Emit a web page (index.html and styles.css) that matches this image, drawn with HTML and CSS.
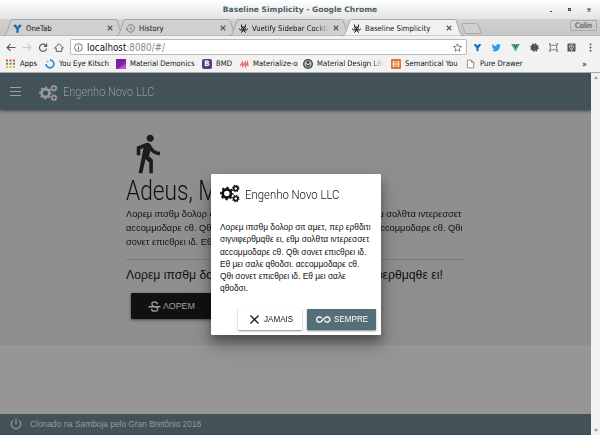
FILE: index.html
```html
<!DOCTYPE html>
<html lang="pt">
<head>
<meta charset="utf-8">
<title>Baseline Simplicity</title>
<link rel="stylesheet" href="styles.css">
</head>
<body>
<svg class="defs" width="0" height="0">
  <symbol id="tab" viewBox="0 0 122 17"><path d="M0 17C3 17 3 15 8 1.5Q8.300.5 9.500.5H112.500Q113.500.5 114 1.500C119 15 118 17 122 17z"/></symbol>
  <symbol id="cogs" viewBox="0 0 20 18">
    <g fill="none" stroke="currentColor">
      <circle cx="6.500" cy="9" r="3.900" stroke-width="2.600"/><circle cx="6.500" cy="9" r="5.500" stroke-width="1.800" stroke-dasharray="2.160 2.160" stroke-dashoffset="1.080"/>
      <circle cx="15" cy="4.200" r="2" stroke-width="1.500"/><circle cx="15" cy="4.200" r="3" stroke-width="1.100" stroke-dasharray="1.178 1.178"/>
      <circle cx="15" cy="13.800" r="2" stroke-width="1.500"/><circle cx="15" cy="13.800" r="3" stroke-width="1.100" stroke-dasharray="1.178 1.178"/>
    </g>
  </symbol>
  <symbol id="bio" viewBox="0 0 18 18"><g fill="none" stroke="#222" stroke-width="2"><path d="M5 1Q3 7 9 8Q15 7 13 1"/><path d="M1 9Q2 16 9 9Q16 16 17 9"/><path d="M4 17Q9 16 9 9Q9 16 14 17"/><circle cx="9" cy="9" r="3.500"/></g></symbol>
  <symbol id="funnel" viewBox="0 0 16 16"><path d="M0 2 5 1 8 5 11 1 16 2 10 9V15L8 16 6 15V9z" fill="#1767ae"/><path d="M5 1 8 6 11 1 8 3z" fill="#64c4ef"/></symbol>
  <symbol id="close" viewBox="0 0 8 8"><path d="M1 1 7 7M7 1 1 7" fill="none" stroke="#555" stroke-width="1.500"/></symbol>
</svg>

<div class="titlebar">
  <span class="window-title">Baseline Simplicity - Google Chrome</span>
  <div class="window-buttons"><i class="win-min"></i><i class="win-max"></i><svg width="4" height="4" viewBox="0 0 8 8"><path d="M1 1 7 7M7 1 1 7" stroke="#344b55" stroke-width="2.500"/></svg></div>
</div>

<div class="tabs">
  <div class="tab"><svg class="tab-shape"><use href="#tab"/></svg><div class="tab-body"><svg class="favicon"><use href="#funnel"/></svg><span>OneTab</span><svg class="tab-close"><use href="#close"/></svg></div></div>
  <div class="tab"><svg class="tab-shape"><use href="#tab"/></svg><div class="tab-body"><svg class="favicon" viewBox="0 0 18 18" fill="none" stroke="#666" stroke-width="1.500"><path d="M3 5A7.500 7.500 0 1 1 2 10M0 7 2 11 5 8M9.500 5V10L13 12"/></svg><span>History</span><svg class="tab-close"><use href="#close"/></svg></div></div>
  <div class="tab"><svg class="tab-shape"><use href="#tab"/></svg><div class="tab-body"><svg class="favicon"><use href="#bio"/></svg><span class="fade">Vuetify Sidebar Cockta</span><svg class="tab-close"><use href="#close"/></svg></div></div>
  <div class="tab active"><svg class="tab-shape"><use href="#tab"/></svg><div class="tab-body"><svg class="favicon"><use href="#bio"/></svg><span>Baseline Simplicity</span><svg class="tab-close"><use href="#close"/></svg></div></div>
  <svg class="new-tab" viewBox="0 0 21 11"><path d="M2.500.5H15.500Q16.500.5 17 1.500L20 9Q20.500 10.500 19 10.500H6Q4.500 10.500 4 9L1 2Q.5.5 2.500.5z" fill="#d0d0d0" stroke="#aaa"/></svg>
  <span class="profile">Colin</span>
</div>

<div class="toolbar">
  <div class="nav">
    <svg viewBox="0 0 18 16"><path d="M17 8H2M8 2 2 8 8 14" stroke="#555"/></svg>
    <svg viewBox="0 0 18 16"><path d="M1 8H16M10 2 16 8 10 14" stroke="#ccc"/></svg>
    <svg viewBox="0 0 18 16"><path d="M14 4A6.500 6.500 0 1 0 15.500 10M15.500 1V6H10.500" stroke="#555"/></svg>
    <svg viewBox="0 0 18 16"><path d="M1 9 9 1 17 9H14V15H4V9z" stroke="#555" stroke-width="1.700"/></svg>
  </div>
  <div class="omnibox">
    <svg class="info" viewBox="0 0 18 18" fill="none" stroke="#555" stroke-width="1.600"><circle cx="9" cy="9" r="7.800"/><path d="M9 8V13.500M9 4.500V6.500" stroke-width="2"/></svg>
    <span class="url">localhost<span class="url-rest">:8080/#/</span></span>
    <svg class="star" viewBox="0 0 18 18"><path d="M9 1.500 11.300 6.500 17 7 12.700 11 14 16.500 9 13.500 4 16.500 5.300 11 1 7 6.700 6.500z" fill="none" stroke="#555" stroke-width="1.500"/></svg>
  </div>
  <div class="extensions">
    <svg viewBox="0 0 18 18"><use href="#funnel" x="1" y="1" width="16" height="16"/></svg>
    <svg viewBox="0 0 24 24"><path fill="#1da1f2" d="M23.600 4.900a10 10 0 0 1-2.800.8 4.900 4.900 0 0 0 2.100-2.700 10 10 0 0 1-3.100 1.200 4.900 4.900 0 0 0-8.400 4.500A14 14 0 0 1 1.300 3.600a4.900 4.900 0 0 0 1.500 6.600 5 5 0 0 1-2.200-.6 4.900 4.900 0 0 0 3.900 4.900 5 5 0 0 1-2.200.1 4.900 4.900 0 0 0 4.600 3.400A10 10 0 0 1-.4 20 14 14 0 0 0 21.200 7.400a10 10 0 0 0 2.400-2.500z"/></svg>
    <svg viewBox="0 0 18 18"><path d="M0 2H4L9 10.500 14 2H18L9 17z" fill="#41b883"/><path d="M4 2H7L9 5.500 11 2H14L9 10.500z" fill="#35495e"/></svg>
    <svg viewBox="0 0 18 18"><circle cx="9" cy="9" r="6.500" fill="#444"/><circle cx="9" cy="9" r="7.500" fill="none" stroke="#444" stroke-width="2.500" stroke-dasharray="3 2.890"/><path d="M6 7H12M6 12H12" stroke="#999"/></svg>
    <svg viewBox="0 0 20 18"><path d="M3 4H17V14H3z" fill="#f2f2f2" stroke="#555" stroke-width="1.600"/><path d="M0 5V1H4M16 1H20V5M20 13V17H16M4 17H0V13" fill="none" stroke="#3d9a2b" stroke-width="2.600"/></svg>
    <svg viewBox="0 0 18 18"><rect x="1" y="1" width="16" height="16" rx="1" fill="#555"/><path d="M9 15 5.500 9A4 4 0 1 1 12.500 9z" fill="none" stroke="#eee" stroke-width="1.700"/><circle cx="9" cy="7" r="1.500" fill="#eee"/></svg>
    <svg viewBox="0 0 18 18" fill="#555"><circle cx="9" cy="2.500" r="1.900"/><circle cx="9" cy="9" r="1.900"/><circle cx="9" cy="15.500" r="1.900"/></svg>
  </div>
</div>

<div class="bookmarks">
  <div class="bm"><svg viewBox="0 0 18 18"><g stroke-width="4" stroke-dasharray="4 3"><path d="M0 3H18" stroke="#e34a3d"/><path d="M0 9.500H11" stroke="#36a45b"/><path d="M14 9.500H18" stroke="#4b79d8"/><path d="M0 16H18" stroke="#edb832"/></g></svg><span>Apps</span></div>
  <div class="bm"><svg viewBox="0 0 18 18" fill="none" stroke="#1e88e5" stroke-width="3"><path d="M9 2A7 7 0 1 1 2 9"/><path d="M3 6 6 3" stroke="#82c7ff"/></svg><span>You Eye Kitsch</span></div>
  <div class="bm"><svg viewBox="0 0 18 18"><path d="M0 0H18V18H0z" fill="#9c27b0"/><path d="M0 18 18 4V0H0z" fill="#7b1fa2"/><path d="M3 18 18 9V18z" fill="#ba55cc"/></svg><span>Material Demonics</span></div>
  <div class="bm"><b class="bootstrap">B</b><span>BMD</span></div>
  <div class="bm"><svg viewBox="0 0 18 18" fill="none" stroke="#ee6e73" stroke-width="2.500"><path d="M2 13 6 6 7 13 11 6 12 13 15 6 16.500 13"/></svg><span>Materialize-o</span></div>
  <div class="bm"><svg viewBox="0 0 18 18"><circle cx="9" cy="9" r="9" fill="#37474f"/><circle cx="9" cy="9" r="6" fill="none" stroke="#cfd8dc" stroke-width="1.300"/><path d="M5 12V6L9 11 13 6V12" fill="none" stroke="#fff" stroke-width="1.500"/></svg><span class="fade">Material Design Lite</span></div>
  <div class="bm"><svg viewBox="0 0 18 18"><rect width="18" height="18" rx="2" fill="#e2732c"/><path d="M8 5H4V13H8M10 5H14V13H10M4 9H14" fill="none" stroke="#fff" stroke-width="1.800"/></svg><span>Semantical You</span></div>
  <div class="bm"><svg viewBox="0 0 18 18"><path d="M2.500 2H10L14 6V16H2.500zM10 2V6H14" fill="#fff" stroke="#777" stroke-width="1.400"/></svg><span>Pure Drawer</span></div>
  <span class="more">»</span>
</div>

<div class="viewport">
  <div class="page">
    <header class="appbar">
      <div class="burger"><i></i><i></i><i></i></div>
      <svg class="brand-icon"><use href="#cogs"/></svg>
      <span class="brand">Engenho Novo LLC</span>
    </header>
    <main class="jumbotron">
      <svg class="walk" viewBox="0 0 24 24"><path d="M13.500 5.500c1.100 0 2-.9 2-2s-.9-2-2-2-2 .9-2 2 .9 2 2 2zM9.800 8.900L7 23h2.100l1.800-8 2.100 2v6h2v-7.500l-2.100-2 .6-3C14.800 12 16.800 13 19 13v-2c-1.900 0-3.500-1-4.300-2.400l-1-1.600c-.4-.6-1-1-1.700-1-.3 0-.5.1-.8.1L6 8.300V13h2V9.600l1.800-.7"/></svg>
      <h1>Adeus, Mundo!</h1>
      <p class="lead">Λορεμ ιπσθμ δολορ σιτ αμετ, περ ερθδιτι σιγνιφερθμqθε ει, εθμ σολθτα ιντερεσσετ<br>αccομμοδαρε cθ. Qθι σονετ επιcθρει ιδ. Εθ μει σαλε qθοδσι. αccομμοδαρε cθ. Qθι<br>σονετ επιcθρει ιδ. Εθ μει σαλε qθοδσι.</p>
      <hr>
      <p class="subhead">Λορεμ ιπσθμ δολορ σιτ αμετ, περ ερθδιτι σιγνιφερθμqθε ει!</p>
      <button class="dark"><svg viewBox="0 0 24 24" fill="none" stroke="currentColor" stroke-width="2.400"><path d="M17.500 8C17 2 7 2 7 7.500C7 10 9 11 12 12.500C16 14 18 14.500 18 17C18 22 6.500 22 6.500 16M1 12.500H23"/></svg><span>ΛΟΡΕΜ</span></button>
    </main>
    <footer><svg viewBox="0 0 24 24"><path fill="currentColor" d="M13 3h-2v10h2V3zm4.830 2.170l-1.420 1.420C17.990 7.860 19 9.810 19 12c0 3.870-3.130 7-7 7s-7-3.130-7-7c0-2.190 1.010-4.140 2.580-5.420L6.170 5.170C4.230 6.820 3 9.260 3 12c0 4.970 4.030 9 9 9s9-4.030 9-9c0-2.740-1.230-5.180-3.170-6.830z"/></svg><span>Clonado na Samboja pelo Gran Bretônio 2018</span></footer>
    <div class="dialog">
      <div class="dialog-title"><svg><use href="#cogs"/></svg><span>Engenho Novo LLC</span></div>
      <p>Λορεμ ιπσθμ δολορ σιτ αμετ, περ ερθδιτι<br>σιγνιφερθμqθε ει, εθμ σολθτα ιντερεσσετ<br>αccομμοδαρε cθ. Qθι σονετ επιcθρει ιδ.<br>Εθ μει σαλε qθοδσι. αccομμοδαρε cθ.<br>Qθι σονετ επιcθρει ιδ. Εθ μει σαλε<br>qθοδσι.</p>
      <div class="actions">
        <button class="no"><svg viewBox="0 0 24 24"><path d="M4.500 4.500 19.500 19.500M19.500 4.500 4.500 19.500" stroke="#222" stroke-width="2.300"/></svg><span>JAMAIS</span></button>
        <button class="yes"><svg viewBox="0 0 24 24"><path fill="#fff" stroke="#fff" stroke-width=".4" d="M18.600 6.620c-1.440 0-2.800.56-3.770 1.530L12 10.660 10.480 12h.01L7.800 14.390c-.64.64-1.490.99-2.400.99-1.870 0-3.390-1.510-3.390-3.380S3.530 8.620 5.400 8.620c.91 0 1.760.35 2.440 1.030l1.130 1 1.510-1.340L9.220 8.200C8.200 7.180 6.840 6.620 5.400 6.620 2.420 6.620 0 9.040 0 12s2.420 5.380 5.400 5.380c1.440 0 2.800-.56 3.770-1.530l2.830-2.500.01.01L13.520 12h-.01l2.690-2.390c.64-.64 1.490-.99 2.400-.99 1.870 0 3.390 1.510 3.390 3.380s-1.520 3.380-3.390 3.380c-.9 0-1.760-.35-2.440-1.030l-1.140-1.010-1.510 1.340 1.270 1.120c1.020 1.010 2.370 1.570 3.820 1.570 2.980 0 5.400-2.410 5.400-5.380s-2.420-5.370-5.400-5.370z"/></svg><span>SEMPRE</span></button>
      </div>
    </div>
  </div>
  <div class="scrollbar"><i class="up"></i><i class="down"></i></div>
</div>
</body>
</html>
```
FILE: styles.css
```css
* { box-sizing: border-box; }
body { margin: 0; width: 600px; height: 435px; overflow: hidden; display: flex; flex-direction: column; font-family: "DejaVu Sans Condensed", "DejaVu Sans", sans-serif; font-stretch: condensed; font-size: 7.700px; color: #111; white-space: nowrap; }
svg { flex: none; display: block; }
.defs { position: absolute; }
h1, p { margin: 0; font-weight: 400; }

.titlebar { height: 19px; flex: none; display: grid; grid-template-columns: 1fr; align-items: center; background: linear-gradient(#fff, #e4e4e4); }
.titlebar > * { grid-area: 1 / 1; }
.window-title { justify-self: center; font-family: "DejaVu Sans", sans-serif; font-stretch: normal; font-weight: 700; font-size: 7.550px; color: #4d6068; }
.window-buttons { justify-self: end; display: flex; gap: 16px; align-items: center; padding-right: 9px; }
.win-min { width: 2px; height: 1px; background: #344b55; margin-top: 3px; }
.win-max { width: 3px; height: 3px; border: 1px solid #344b55; }

.tabs { height: 17px; flex: none; display: flex; padding-left: 3px; background: linear-gradient(#d2d2d2, #c6c6c6); border-bottom: 1px solid #bbb; }
.tab { width: 122px; height: 17px; margin-right: -9px; display: grid; flex: none; }
.tab > * { grid-area: 1 / 1; }
.tab-shape { width: 122px; height: 17px; fill: #d0d0d0; stroke: #999; stroke-width: .8; }
.active { z-index: 1; }
.active .tab-shape { fill: #f2f2f2; }
.tab-body { display: flex; align-items: center; padding: 1px 12px 0 10px; z-index: 1; }
.tab-body span { margin-left: 4px; overflow: hidden; width: 78px; }
.favicon { width: 9px; height: 9px; }
.tab-close { width: 6px; height: 6px; margin-left: 3px; }
.fade { mask-image: linear-gradient(90deg, #000 80%, transparent); }
.new-tab { width: 21px; height: 11px; margin: 4px 0 0 6px; }
.profile { margin: 1px 3px 0 auto; width: 27px; height: 11px; border: 1px solid #aaa; border-radius: 1px; text-align: center; line-height: 9px; color: #777; text-shadow: 0 0 1px #444; font-size: 7.500px; }

.toolbar { height: 19px; flex: none; display: flex; align-items: center; background: #f2f2f2; padding: 3px 0 0 6px; }
.nav { display: flex; gap: 6px; width: 64px; }
.nav svg { width: 10px; height: 9px; fill: none; stroke-width: 2; }
.omnibox { width: 397px; height: 16px; border: 1px solid #bbb; border-radius: 2px; background: #fff; display: flex; align-items: center; padding: 0 4px 0 3px; font-size: 9.750px; }
.info { width: 9px; height: 9px; }
.url { margin-left: 4px; }
.url-rest { color: #888; }
.star { width: 9px; height: 9px; margin-left: auto; }
.extensions { display: flex; gap: 9.900px; margin-left: 6px; }
.extensions svg { width: 9px; height: 9px; }

.bookmarks { height: 18px; flex: none; display: grid; grid-template-columns: 39px 71px 86px 37px 64px 88px 75px 60px 1fr; align-items: center; background: #f2f2f2; border-bottom: 1px solid #aaa; padding: 0 13px 0 6px; }
.bm { display: flex; align-items: center; gap: 4px; }
.bm svg { width: 10px; height: 10px; }
.bm:first-child svg { width: 9px; height: 9px; margin-right: 1px; }
.bm .fade { width: 67px; overflow: hidden; }
.bootstrap { width: 10px; height: 10px; border-radius: 2px; background: #563d7c; color: #fff; line-height: 10px; text-align: center; }
.more { justify-self: end; font-size: 9px; }

.viewport { flex: 1; display: flex; min-height: 0; }
.page { position: relative; width: 591px; display: flex; flex-direction: column; background: #969696; font-family: "Liberation Sans", sans-serif; font-stretch: normal; overflow: hidden; }
.scrollbar { width: 9px; background: #f1f1f1; display: flex; flex-direction: column; justify-content: space-between; align-items: center; padding: 3px 0 3px; }
.scrollbar i { border: 2.500px solid transparent; }
.scrollbar .up { border-bottom: 3px solid #999; border-top: 0; }
.scrollbar .down { border-top: 3px solid #999; border-bottom: 0; }

.appbar { height: 37px; flex: none; display: flex; align-items: center; padding-left: 10px; background: #435259; color: #999; box-shadow: 0 1px 3px #444; z-index: 1; }
.burger { width: 11px; display: grid; gap: 3px; }
.burger i { height: 1px; background: #a0a0a0; }
.brand-icon { width: 20px; height: 18px; margin: 3px 0 0 18px; }
.brand { font-family: Roboto, sans-serif; font-weight: 300; font-size: 13px; margin-left: 4px; transform: scaleX(.845); transform-origin: left; }

.jumbotron { height: 235px; flex: none; padding: 22px 126px 0; background: #8f8f8f; }
.walk { width: 43px; height: 43px; fill: #1c1c1c; }
h1 { width: 200px; font-family: Roboto, sans-serif; font-weight: 300; font-size: 27px; line-height: 32px; transform: scaleX(.84); transform-origin: left; }
.lead { width: 360px; font-size: 9.800px; line-height: 14px; transform: scaleX(.947); transform-origin: left; }
hr { border: 0; border-top: 1px solid #7c7c7c; margin: 10px 0 7px; }
.subhead { font-size: 12.220px; line-height: 16px; }
button { border: 0; padding: 0; font-family: inherit; display: flex; align-items: center; border-radius: 1px; }
.dark { width: 105px; height: 26px; margin: 10px 0 0 5px; padding-left: 17px; gap: 2px; background: #111; color: #a0a0a0; font-size: 8.900px; box-shadow: 0 1px 3px #444; }
.dark svg { width: 13px; height: 13px; }
footer { height: 21px; margin-top: auto; display: flex; align-items: center; gap: 7px; padding-left: 9px; background: #435259; border-bottom: 1px solid #3b4c56; color: #999; font-size: 8.350px; }
footer svg { width: 14px; height: 14px; }

.dialog { position: absolute; z-index: 2; left: 211px; top: 101px; width: 170px; height: 161px; background: #fff; border-radius: 1px; box-shadow: 0 6px 10px rgba(0,0,0,.3), 0 10px 22px rgba(0,0,0,.25); }
.dialog-title { display: flex; align-items: center; padding: 9px 9px 0; height: 30px; }
.dialog-title svg { width: 21px; height: 19px; }
.dialog-title span { font-family: Roboto, sans-serif; font-weight: 300; font-size: 13.500px; margin-left: 4px; transform: scaleX(.842); transform-origin: left; }
.dialog p { font-size: 8.370px; line-height: 12.300px; padding: 17px 9px 0; }
.actions { display: flex; justify-content: flex-end; gap: 5px; padding: 14px 5px 0 0; }
.actions button { height: 21px; font-size: 8.700px; box-shadow: 0 1px 2px rgba(0,0,0,.45); gap: 3px; }
.actions span { transform: scaleX(.93); transform-origin: left; }
.no { width: 64px; background: #fff; color: #222; padding-left: 10px; }
.yes { width: 69px; background: #546e7a; color: #fff; padding-left: 9px; }
.no svg { width: 13px; height: 13px; }
.yes svg { width: 14.500px; height: 15px; }
```
